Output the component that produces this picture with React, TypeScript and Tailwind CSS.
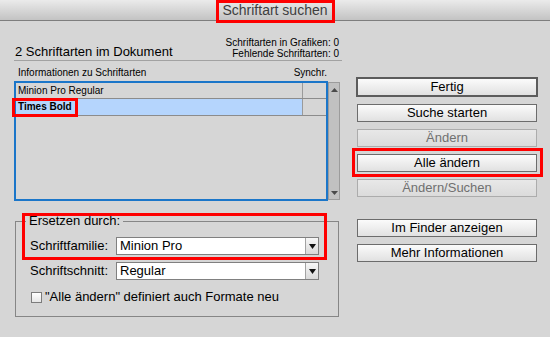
import React from "react";

function Btn({
  children,
  variant = "normal",
  className = "",
}: {
  children: React.ReactNode;
  variant?: "normal" | "default" | "disabled";
  className?: string;
}) {
  if (variant === "default") {
    return (
      <div
        className={`h-[20px] border-2 border-[#5c5c5c] bg-gradient-to-b from-[#fbfbfb] to-[#e1e1e1] flex items-center justify-center text-[13px] leading-[16px] text-black ${className}`}
      >
        {children}
      </div>
    );
  }
  if (variant === "disabled") {
    return (
      <div
        className={`mx-[1px] h-[18px] border border-[#acacac] bg-gradient-to-b from-[#e8e8e8] to-[#dbdbdb] flex items-center justify-center text-[13px] leading-[16px] text-[#707070] ${className}`}
      >
        {children}
      </div>
    );
  }
  return (
    <div
      className={`mx-[1px] h-[18px] border border-[#6c6c6c] bg-gradient-to-b from-[#fbfbfb] to-[#e1e1e1] flex items-center justify-center text-[13px] leading-[16px] text-black ${className}`}
    >
      {children}
    </div>
  );
}

function Select({ value }: { value: string }) {
  return (
    <div className="h-[18px] flex border border-[#808080] bg-white">
      <div className="flex-1 pl-[3px] text-[13px] leading-[16px] text-black">{value}</div>
      <div className="w-[13px] border-l border-[#a3a3a3] bg-gradient-to-b from-[#f7f7f7] to-[#dadada] flex items-center justify-center">
        <svg width="7" height="5" viewBox="0 0 7 5">
          <polygon points="0,0 7,0 3.5,5" fill="#111" />
        </svg>
      </div>
    </div>
  );
}

export default function App() {
  return (
    <div className="relative w-[550px] h-[337px] overflow-hidden bg-[#d6d6d6] font-['Liberation_Sans',Arial,sans-serif] text-black">
      {/* Title bar */}
      <div className="h-[21px] border-b border-[#7e7e7e] bg-gradient-to-b from-[#ebebeb] to-[#c3c3c3] flex items-center justify-center">
        <span className="text-[14px] leading-[20px] text-[#3e3e3e]">Schriftart suchen</span>
      </div>

      <div className="flex pl-[14px]">
        {/* Left column */}
        <div className="w-[328px] flex flex-col">
          <div className="h-[40px] border-b border-[#a2a2a2] flex items-end justify-between pb-[1px]">
            <div className="pl-[1px] text-[13px] leading-[15px]">2 Schriftarten im Dokument</div>
            <div className="pr-[3px] text-right text-[10px] leading-[11px]">
              <div>Schriftarten in Grafiken: 0</div>
              <div>Fehlende Schriftarten: 0</div>
            </div>
          </div>

          <div className="mt-[6px] w-[326px] flex justify-between pl-[4px] pr-[13px] text-[10px] leading-[12px]">
            <span>Informationen zu Schriftarten</span>
            <span>Synchr.</span>
          </div>

          <div className="mt-[2px] flex h-[120px] w-[326px]">
            <div className="w-[314px] h-full border-2 border-[#1b76c9] flex flex-col">
              <div className="h-[16px] border-b border-[#8c8c8c] flex text-[10px] leading-[15px]">
                <div className="flex-1 pl-[2px]">Minion Pro Regular</div>
                <div className="w-[24px] border-l border-[#9a9a9a]" />
              </div>
              <div className="h-[17px] border-b border-[#8c8c8c] flex text-[10px] leading-[16px] font-bold">
                <div className="flex-1 pl-[2px] bg-[#b5d5fd]">Times Bold</div>
                <div className="w-[24px] border-l border-[#9a9a9a]" />
              </div>
            </div>
            <div className="mt-[1px] w-[12px] h-[118px] bg-[#c1c1c1] border border-[#9c9c9c] flex flex-col justify-between items-center pt-[5px] pb-[4px]">
              <svg width="7" height="4" viewBox="0 0 7 4">
                <polygon points="3.5,0 7,4 0,4" fill="#4a4a4a" />
              </svg>
              <svg width="7" height="4" viewBox="0 0 7 4">
                <polygon points="0,0 7,0 3.5,4" fill="#4a4a4a" />
              </svg>
            </div>
          </div>

          <fieldset className="mt-[12px] ml-[1px] w-[324px] border border-[#868686]">
            <legend className="ml-[10px] px-[3px] text-[13px] leading-[16px]">Ersetzen durch:</legend>
            <div className="pl-[14px] pt-[8px] pb-[12px]">
              <div className="grid grid-cols-[86px_203px] gap-y-[7px] items-center text-[13px] leading-[16px]">
                <span>Schriftfamilie:</span>
                <Select value="Minion Pro" />
                <span>Schriftschnitt:</span>
                <Select value="Regular" />
              </div>
              <div className="mt-[10px] h-[14px] flex items-center">
                <span className="ml-[1px] w-[11px] h-[11px] border border-[#7c7c7c] bg-gradient-to-b from-white to-[#e6e6e6]" />
                <span className="ml-[3px] text-[13px] leading-[14px]">"Alle ändern" definiert auch Formate neu</span>
              </div>
            </div>
          </fieldset>
        </div>

        {/* Right column */}
        <div className="ml-[14px] w-[182px] flex flex-col pt-[56px]">
          <Btn variant="default">Fertig</Btn>
          <Btn className="mt-[7px]">Suche starten</Btn>
          <Btn variant="disabled" className="mt-[7px]">Ändern</Btn>
          <Btn className="mt-[7px]">Alle ändern</Btn>
          <Btn variant="disabled" className="mt-[7px]">Ändern/Suchen</Btn>
          <Btn className="mt-[22px]">Im Finder anzeigen</Btn>
          <Btn className="mt-[7px]">Mehr Informationen</Btn>
        </div>
      </div>

      {/* Red annotation boxes */}
      <div className="absolute left-[216px] top-0 w-[119px] h-[23px] border-[3px] border-[#fe0000]" />
      <div className="absolute left-[12px] top-[98px] w-[66px] h-[19px] border-[3px] border-[#fe0000]" />
      <div className="absolute left-[352px] top-[148px] w-[191px] h-[29px] border-[3px] border-[#fe0000]" />
      <div className="absolute left-[22px] top-[213px] w-[305px] h-[47px] border-[3px] border-[#fe0000]" />
    </div>
  );
}
